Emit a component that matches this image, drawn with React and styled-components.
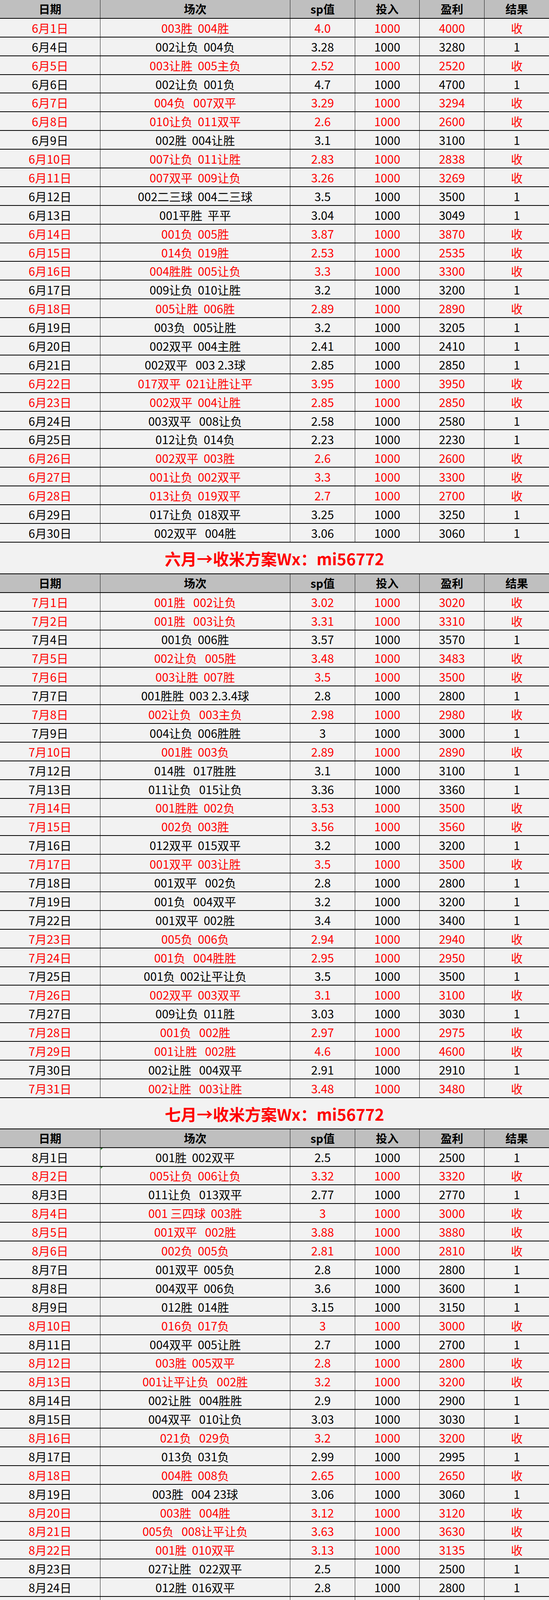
import React from 'react';
import styled, { createGlobalStyle } from 'styled-components';

const GlobalStyle = createGlobalStyle`
  body {
    margin: 0;
    background: #ffffff;
    font-family: "Noto Sans CJK SC", "Noto Sans", sans-serif;
  }
`;

const COLS = '257px 486px 166px 165px 166px 165px';

const june = [
  ['6月1日', '003胜  004胜', '4.0', '4000', 1],
  ['6月4日', '002让负  004负', '3.28', '3280', 0],
  ['6月5日', '003让胜  005主负', '2.52', '2520', 1],
  ['6月6日', '002让负  001负', '4.7', '4700', 0],
  ['6月7日', '004负   007双平', '3.29', '3294', 1],
  ['6月8日', '010让负  011双平', '2.6', '2600', 1],
  ['6月9日', '002胜  004让胜', '3.1', '3100', 0],
  ['6月10日', '007让负  011让胜', '2.83', '2838', 1],
  ['6月11日', '007双平  009让负', '3.26', '3269', 1],
  ['6月12日', '002二三球  004二三球', '3.5', '3500', 0],
  ['6月13日', '001平胜  平平', '3.04', '3049', 0],
  ['6月14日', '001负  005胜', '3.87', '3870', 1],
  ['6月15日', '014负  019胜', '2.53', '2535', 1],
  ['6月16日', '004胜胜  005让负', '3.3', '3300', 1],
  ['6月17日', '009让负  010让胜', '3.2', '3200', 0],
  ['6月18日', '005让胜  006胜', '2.89', '2890', 1],
  ['6月19日', '003负   005让胜', '3.2', '3205', 0],
  ['6月20日', '002双平  004主胜', '2.41', '2410', 0],
  ['6月21日', '002双平   003 2.3球', '2.85', '2850', 0],
  ['6月22日', '017双平  021让胜让平', '3.95', '3950', 1],
  ['6月23日', '002双平  004让胜', '2.85', '2850', 1],
  ['6月24日', '003双平   008让负', '2.58', '2580', 0],
  ['6月25日', '012让负  014负', '2.23', '2230', 0],
  ['6月26日', '002双平  003胜', '2.6', '2600', 1],
  ['6月27日', '001让负  002双平', '3.3', '3300', 1],
  ['6月28日', '013让负  019双平', '2.7', '2700', 1],
  ['6月29日', '017让负  018双平', '3.25', '3250', 0],
  ['6月30日', '002双平   004胜', '3.06', '3060', 0],
];

const july = [
  ['7月1日', '001胜   002让负', '3.02', '3020', 1],
  ['7月2日', '001胜   003让负', '3.31', '3310', 1],
  ['7月4日', '001负  006胜', '3.57', '3570', 0],
  ['7月5日', '002让负   005胜', '3.48', '3483', 1],
  ['7月6日', '003让胜  007胜', '3.5', '3500', 1],
  ['7月7日', '001胜胜  003 2.3.4球', '2.8', '2800', 0],
  ['7月8日', '002让负   003主负', '2.98', '2980', 1],
  ['7月9日', '004让负  006胜胜', '3', '3000', 0],
  ['7月10日', '001胜  003负', '2.89', '2890', 1],
  ['7月12日', '014胜   017胜胜', '3.1', '3100', 0],
  ['7月13日', '011让负   015让负', '3.36', '3360', 0],
  ['7月14日', '001胜胜  002负', '3.53', '3500', 1],
  ['7月15日', '002负  003胜', '3.56', '3560', 1],
  ['7月16日', '012双平  015双平', '3.2', '3200', 0],
  ['7月17日', '001双平  003让胜', '3.5', '3500', 1],
  ['7月18日', '001双平   002负', '2.8', '2800', 0],
  ['7月19日', '001负   004双平', '3.2', '3200', 0],
  ['7月22日', '001双平  002胜', '3.4', '3400', 0],
  ['7月23日', '005负  006负', '2.94', '2940', 1],
  ['7月24日', '001负   004胜胜', '2.95', '2950', 1],
  ['7月25日', '001负  002让平让负', '3.5', '3500', 0],
  ['7月26日', '002双平  003双平', '3.1', '3100', 1],
  ['7月27日', '009让负  011胜', '3.03', '3030', 0],
  ['7月28日', '001负   002胜', '2.97', '2975', 1],
  ['7月29日', '001让胜   002胜', '4.6', '4600', 1],
  ['7月30日', '002让胜   004双平', '2.91', '2910', 0],
  ['7月31日', '002让胜   003让胜', '3.48', '3480', 1],
];

const august = [
  ['8月1日', '001胜  002双平', '2.5', '2500', 0, true],
  ['8月2日', '005让负  006让负', '3.32', '3320', 1, true],
  ['8月3日', '011让负   013双平', '2.77', '2770', 0],
  ['8月4日', '001 三四球  003胜', '3', '3000', 1],
  ['8月5日', '001双平   002胜', '3.88', '3880', 1],
  ['8月6日', '002负  005负', '2.81', '2810', 1],
  ['8月7日', '001双平  005负', '2.8', '2800', 0],
  ['8月8日', '004双平  006负', '3.6', '3600', 0],
  ['8月9日', '012胜  014胜', '3.15', '3150', 0],
  ['8月10日', '016负  017负', '3', '3000', 1],
  ['8月11日', '004双平  005让胜', '2.7', '2700', 0],
  ['8月12日', '003胜  005双平', '2.8', '2800', 1],
  ['8月13日', '001让平让负   002胜', '3.2', '3200', 1],
  ['8月14日', '002让胜   004胜胜', '2.9', '2900', 0],
  ['8月15日', '004双平   010让负', '3.03', '3030', 0],
  ['8月16日', '021负   029负', '3.2', '3200', 1],
  ['8月17日', '013负  031负', '2.99', '2995', 0],
  ['8月18日', '004胜  008负', '2.65', '2650', 1],
  ['8月19日', '003胜   004 23球', '3.06', '3060', 0],
  ['8月20日', '003胜   004胜', '3.12', '3120', 1],
  ['8月21日', '005负   008让平让负', '3.63', '3630', 1],
  ['8月22日', '001胜  010双平', '3.13', '3135', 1],
  ['8月23日', '027让胜   022双平', '2.5', '2500', 0],
  ['8月24日', '012胜  016双平', '2.8', '2800', 0],
  ['8月25日', '005让平让负   007让胜', '2.65', '2650', 1],
  ['8月26日', '002让负   003让负', '2.87', '2870', 0],
  ['8月27日', '004胜胜   005胜', '2.81', '2810', 1],
  ['8月28日', '001让胜   006胜', '3.41', '3410', 0],
];

const Sheet = styled.div`
  width: 1405px;
  background: #f2f2f2;
`;

const Row = styled.div`
  display: grid;
  grid-template-columns: ${COLS};
  height: 47.9px;
  box-sizing: border-box;
  border-bottom: 2px solid #000;
  background: ${(p) => (p.$head ? '#bfbfbf' : '#f2f2f2')};
`;

const Cell = styled.div`
  position: relative;
  display: flex;
  align-items: center;
  justify-content: center;
  border-right: 1px solid #1a1a1a;
  white-space: pre;
  font-size: 30px;
  line-height: 1;
  color: ${(p) => (p.$red ? '#ff0000' : '#000')};
  &:last-child {
    border-right: none;
  }
  ${(p) =>
    p.$flag &&
    `&::before {
      content: '';
      position: absolute;
      left: 1px;
      top: 0;
      border-top: 5px solid #1e7a1e;
      border-right: 5px solid transparent;
    }`}
`;

const HeadCell = styled(Cell)`
  font-size: 29px;
  font-weight: 700;
`;

const Banner = styled.div`
  height: ${(p) => p.$h}px;
  box-sizing: border-box;
  border-bottom: 2px solid #000;
  display: flex;
  align-items: center;
  justify-content: center;
  color: #ff0000;
  font-size: 41px;
  font-weight: 700;
  padding-top: 2px;
`;

const Footer = styled.div`
  display: grid;
  grid-template-columns: 257px 486px 166px 165px 331px;
  height: 207px;
  box-sizing: border-box;
  border-bottom: 3px solid #000;
`;

const FootCell = styled.div`
  display: flex;
  align-items: center;
  justify-content: center;
  border-right: 1px solid #1a1a1a;
  color: #ff0000;
  font-weight: 700;
  font-size: ${(p) => p.$size || 44}px;
  &:last-child {
    border-right: none;
  }
`;

const HEADS = ['日期', '场次', 'sp值', '投入', '盈利', '结果'];

function Header() {
  return (
    <Row $head>
      {HEADS.map((h) => (
        <HeadCell key={h}>{h}</HeadCell>
      ))}
    </Row>
  );
}

function DataRow({ item }) {
  const [date, match, sp, profit, hit, flag] = item;
  const red = !!hit;
  return (
    <Row>
      <Cell $red={red}>{date}</Cell>
      <Cell $red={red} $flag={flag}>{match}</Cell>
      <Cell $red={red}>{sp}</Cell>
      <Cell $red={red}>1000</Cell>
      <Cell $red={red}>{profit}</Cell>
      <Cell $red={red}>{hit ? '收' : '1'}</Cell>
    </Row>
  );
}

function Month({ rows }) {
  return (
    <>
      <Header />
      {rows.map((r) => (
        <DataRow key={r[0]} item={r} />
      ))}
    </>
  );
}

export default function App() {
  return (
    <>
      <GlobalStyle />
      <Sheet>
        <Month rows={june} />
        <Banner $h={81}>六月→收米方案Wx：mi56772</Banner>
        <Month rows={july} />
        <Banner $h={80}>七月→收米方案Wx：mi56772</Banner>
        <Month rows={august} />
        <Footer>
          <FootCell>8月29日</FootCell>
          <FootCell $size={43}>方案已出欢迎查看</FootCell>
          <FootCell>→</FootCell>
          <FootCell $size={48}>Wx</FootCell>
          <FootCell $size={50}>mi56772</FootCell>
        </Footer>
      </Sheet>
    </>
  );
}
